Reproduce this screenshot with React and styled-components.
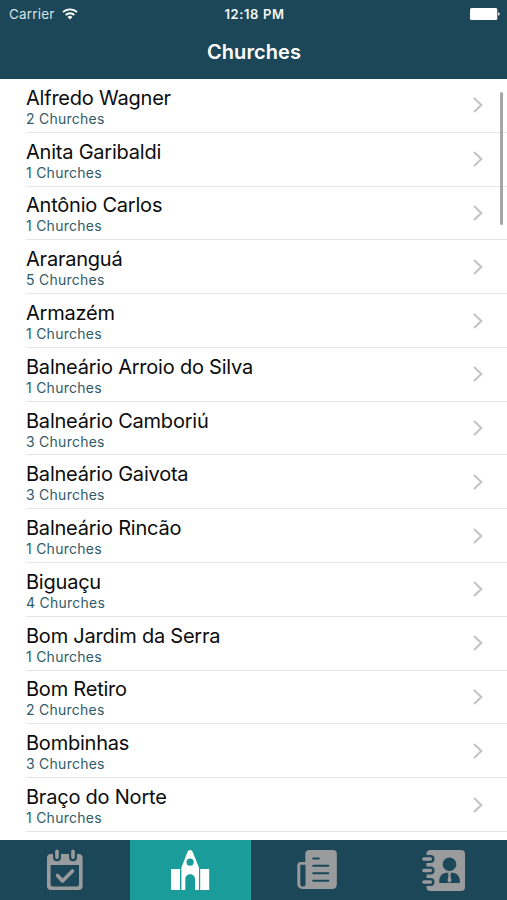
import React from 'react';
import styled, { createGlobalStyle } from 'styled-components';

const GlobalStyle = createGlobalStyle`
  body {
    margin: 0;
    background-color: #ffffff;
    font-family: Inter, "Liberation Sans", sans-serif;
    overflow: hidden;
  }
`;

const StyledScreen = styled.div`
  display: flex;
  flex-direction: column;
  width: 507px;
  height: 900px;
  overflow: hidden;
`;

const StyledHeader = styled.header`
  flex: none;
  box-sizing: border-box;
  height: 79px;
  background-color: #1b4758;
  color: #ffffff;
`;

const StyledStatusBar = styled.div`
  display: grid;
  grid-template-columns: 1fr auto 1fr;
  align-items: center;
  height: 27px;
  padding: 0 7px 0 9px;
`;

const StyledCarrier = styled.span`
  display: flex;
  align-items: center;
  gap: 7px;
  color: #d5e2e6;
  font-size: 13.5px;
  letter-spacing: 0.2px;
  line-height: 28px;
`;

const StyledClock = styled.span`
  padding-top: 1px;
  color: #f4f8f9;
  font-weight: 600;
  font-size: 13px;
  letter-spacing: 0.6px;
  line-height: 27px;
`;

const StyledBattery = styled.svg`
  justify-self: end;
`;

const StyledTitle = styled.h1`
  margin: 0;
  padding-left: 1px;
  font-size: 20px;
  font-weight: 600;
  letter-spacing: 0.1px;
  line-height: 51px;
  text-align: center;
`;

const StyledList = styled.ul`
  position: relative;
  flex: 1;
  min-height: 0;
  margin: 0;
  padding: 0 0 0 26px;
  list-style: none;
  overflow: hidden;
`;

const StyledRow = styled.li`
  display: flex;
  align-items: center;
  justify-content: space-between;
  box-sizing: border-box;
  height: 53.79px;
  padding-right: 24.5px;
  border-bottom: 1px solid #e6e6e7;
`;

const StyledLabel = styled.div`
  padding-top: 2px;
`;

const StyledCity = styled.div`
  color: #0c0c0c;
  font-size: 20px;
  letter-spacing: -0.22px;
  line-height: 24px;
  white-space: nowrap;
`;

const StyledCount = styled.div`
  color: #2f5b69;
  font-size: 14px;
  letter-spacing: 0.25px;
  line-height: 17px;
`;

const StyledScrollbar = styled.li`
  position: absolute;
  top: 13px;
  right: 4px;
  width: 3px;
  height: 133px;
  border-radius: 2px;
  background-color: #a5a5a6;
`;

const StyledTabBar = styled.nav`
  display: grid;
  grid-template-columns: 130px 121px 1fr 127px;
  flex: none;
  height: 60px;
  background-color: #1b4758;
`;

const StyledTab = styled.button`
  display: flex;
  align-items: center;
  justify-content: center;
  padding: 0;
  border: 0;
  background-color: ${props => (props.$active ? '#199c9a' : 'transparent')};
  color: ${props => (props.$active ? '#ffffff' : '#999b9c')};
`;

const cities = [
  { name: 'Alfredo Wagner', count: 2 },
  { name: 'Anita Garibaldi', count: 1 },
  { name: 'Antônio Carlos', count: 1 },
  { name: 'Araranguá', count: 5 },
  { name: 'Armazém', count: 1 },
  { name: 'Balneário Arroio do Silva', count: 1 },
  { name: 'Balneário Camboriú', count: 3 },
  { name: 'Balneário Gaivota', count: 3 },
  { name: 'Balneário Rincão', count: 1 },
  { name: 'Biguaçu', count: 4 },
  { name: 'Bom Jardim da Serra', count: 1 },
  { name: 'Bom Retiro', count: 2 },
  { name: 'Bombinhas', count: 3 },
  { name: 'Braço do Norte', count: 1 },
];

const WifiIcon = () => (
  <svg width="16" height="12" viewBox="0 0 16 12" fill="none" stroke="#ffffff" strokeWidth="1.8">
    <path d="M1 4.2a10 10 0 0 1 14 0M3.7 7a6.1 6.1 0 0 1 8.6 0" />
    <path d="M5.6 8.9a3.4 3.4 0 0 1 4.8 0L8 11.4z" fill="#ffffff" stroke="none" />
  </svg>
);

const BatteryIcon = () => (
  <StyledBattery width="30" height="12" viewBox="0 0 30 12" fill="#ffffff">
    <rect width="27.3" height="12" rx="1.5" />
    <path d="M28.2 4.2c2 .5 2 3.1 0 3.6z" />
  </StyledBattery>
);

const Chevron = () => (
  <svg width="10" height="16" viewBox="0 0 10 16" fill="none" stroke="#c4c4c7" strokeWidth="2.1">
    <path d="M1 1l7.3 7L1 15" />
  </svg>
);

const CalendarIcon = () => (
  <svg width="36" height="42" viewBox="0 0 36 42">
    <path
      d="M4 5h2v3.2a4 4 0 0 0 8 0V5h8v3.2a4 4 0 0 0 8 0V5h2a3.6 3.6 0 0 1 3.6 4v28a4 4 0 0 1-4 4H4a4 4 0 0 1-4-4V9a4 4 0 0 1 4-4zM3.6 16v19.5a2 2 0 0 0 2 2H30a2 2 0 0 0 2-2V16z"
      fill="currentColor"
      fillRule="evenodd"
    />
    <path
      d="M10 2.2v6M26 2.2v6M10.5 26.5l5 5.5L25.5 22"
      fill="none"
      stroke="currentColor"
      strokeWidth="3.6"
      strokeLinecap="round"
      strokeLinejoin="round"
    />
  </svg>
);

const ChurchIcon = () => (
  <svg width="39" height="40" viewBox="0 0 39 40" fill="currentColor">
    <path d="M0 19h9v21H0zM29.2 19h9v21h-9z" />
    <path
      d="M16.3 2.4c1-3.2 4.6-3.2 5.6 0L28 17.5v3.2L28 40h-3.9V29.3c0-6.6-9.8-6.6-9.8 0V40h-3.9V17.5zM19.1 8.6a3.6 3.6 0 1 0 0 7.2 3.6 3.6 0 0 0 0-7.2z"
      fillRule="evenodd"
    />
  </svg>
);

const NewsIcon = () => (
  <svg width="37" height="40" viewBox="1.5 0 37 40" overflow="visible">
    <path
      d="M12 0h24a3.5 3.5 0 0 1 3.5 3.5v31A4.8 4.8 0 0 1 34.7 39H5a5 5 0 0 1-5-5V15.5A3.5 3.5 0 0 1 3.5 12H8V4a4 4 0 0 1 4-4zM3 14.8V34a2.6 2.6 0 0 0 5.2 0V14.8z"
      fill="currentColor"
      fillRule="evenodd"
      transform="translate(1.8 0)"
    />
    <path
      d="M17.8 8.5h5.5M17.8 15.7h15M17.8 23.2h15M17.8 30.7h15"
      fill="none"
      stroke="#1b4758"
      strokeWidth="2.1"
      strokeLinecap="round"
    />
  </svg>
);

const ContactsIcon = () => (
  <svg width="43" height="41" viewBox="0 0 43 41">
    <rect x="4.5" width="38.5" height="41" rx="4" fill="currentColor" />
    {[9, 20.5, 32].map(y => (
      <g key={y} fill="none" strokeLinecap="round">
        <path d={`M2 ${y}h6.5`} stroke="#1b4758" strokeWidth="8" />
        <path d={`M2 ${y}h6.3`} stroke="currentColor" strokeWidth="3.6" />
      </g>
    ))}
    <circle cx="27.5" cy="14.2" r="6.8" fill="#1b4758" />
    <path d="M17.2 33v-2c0-4.5 2.6-7.2 6.6-8.2h7.4c4 1 6.6 3.7 6.6 8.2v2z" fill="#1b4758" />
    <path d="M25.6 22.5h3.8l-.9 2.6 1 5.5-2 2.4-2-2.4 1-5.5z" fill="currentColor" />
  </svg>
);

const App = () => (
  <StyledScreen>
    <GlobalStyle />
    <StyledHeader>
      <StyledStatusBar>
        <StyledCarrier>
          Carrier <WifiIcon />
        </StyledCarrier>
        <StyledClock>12:18 PM</StyledClock>
        <BatteryIcon />
      </StyledStatusBar>
      <StyledTitle>Churches</StyledTitle>
    </StyledHeader>
    <StyledList>
      {cities.map(({ name, count }) => (
        <StyledRow key={name}>
          <StyledLabel>
            <StyledCity>{name}</StyledCity>
            <StyledCount>{count} Churches</StyledCount>
          </StyledLabel>
          <Chevron />
        </StyledRow>
      ))}
      <StyledScrollbar />
    </StyledList>
    <StyledTabBar>
      <StyledTab type="button">
        <CalendarIcon />
      </StyledTab>
      <StyledTab type="button" $active>
        <ChurchIcon />
      </StyledTab>
      <StyledTab type="button">
        <NewsIcon />
      </StyledTab>
      <StyledTab type="button">
        <ContactsIcon />
      </StyledTab>
    </StyledTabBar>
  </StyledScreen>
);

export default App;
